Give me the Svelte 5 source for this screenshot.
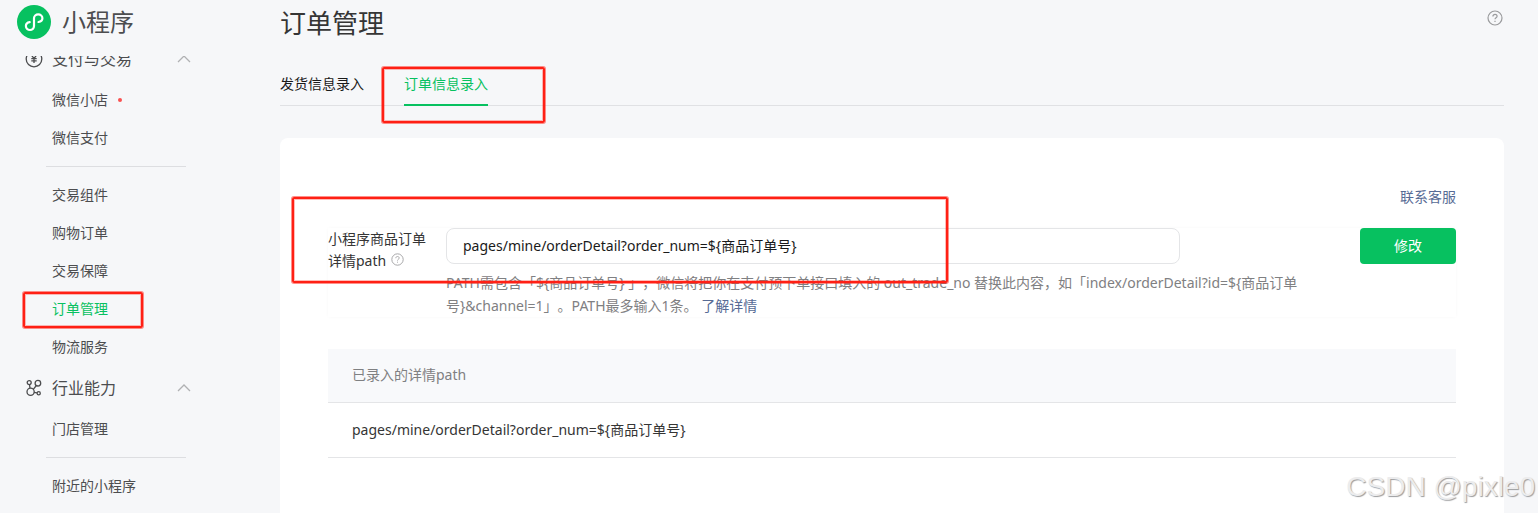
<script>
  const groups = [
    {
      title: '支付与交易',
      icon: 'pay',
      sections: [
        [{ label: '微信小店', dot: true }, { label: '微信支付' }],
        [
          { label: '交易组件' },
          { label: '购物订单' },
          { label: '交易保障' },
          { label: '订单管理', active: true },
          { label: '物流服务' }
        ]
      ]
    },
    {
      title: '行业能力',
      icon: 'industry',
      sections: [[{ label: '门店管理' }], [{ label: '附近的小程序' }]]
    }
  ];

  const tabs = [
    { label: '发货信息录入' },
    { label: '订单信息录入', active: true }
  ];

  let path = $state('pages/mine/orderDetail?order_num=${商品订单号}');
  const savedPaths = ['pages/mine/orderDetail?order_num=${商品订单号}'];
  const hintVar = '「${商品订单号} 」';
  const hintExample = '「index/orderDetail?id=${商品订单号}&channel=1」';
</script>

{#snippet help()}
  <svg class="help" viewBox="0 0 16 16" aria-hidden="true">
    <circle cx="8" cy="8" r="7" />
    <path d="M5.9 6.4c0-1.3.9-2.1 2.1-2.1s2.1.8 2.1 1.9c0 1.5-2.1 1.6-2.1 3.1" />
    <path d="M8 10.7v1.2" />
  </svg>
{/snippet}

<div class="app">
  <aside>
    <a class="brand" href="#home">
      <svg viewBox="0 0 34 34" aria-hidden="true">
        <circle cx="17" cy="17" r="17" fill="#07c160" />
        <path
          d="M12.7 17.2c-2.3.4-3.8 1.9-3.8 3.9 0 2.2 1.9 3.9 4.1 3.9s4-1.700 4-3.900v-7.800c0-2.200 1.900-3.900 4.200-3.900s4.200 1.600 4.200 3.800c0 1.900-1.500 3.400-3.900 3.800"
          fill="none" stroke="#fff" stroke-width="2.2" stroke-linecap="round" />
      </svg>
      <span>小程序</span>
    </a>
    <nav>
      <div class="menu">
        {#each groups as group}
          <button class="group" type="button">
            {#if group.icon === 'pay'}
              <svg class="glyph" viewBox="0 0 18 18" aria-hidden="true">
                <circle cx="9" cy="9" r="7.800" />
                <path d="M6.300 5l2.700 3.500L11.700 5M9 8.500v4.500M6.300 8.700h5.400M6.300 10.800h5.400" />
              </svg>
            {:else}
              <svg class="glyph" viewBox="0 0 18 18" aria-hidden="true">
                <circle cx="4.200" cy="3.600" r="2" />
                <circle cx="12.900" cy="4.200" r="2.800" />
                <circle cx="5.600" cy="12.700" r="3.600" />
                <circle cx="13.700" cy="14.200" r="1.600" />
                <path d="M4.500 5.600l.5 3.500M11.300 6.500L8.300 10.300M9 13.300l3.100.600" />
              </svg>
            {/if}
            <span>{group.title}</span>
            <svg class="chevron" viewBox="0 0 14 8" aria-hidden="true">
              <path d="M1 7l6-6 6 6" />
            </svg>
          </button>
          {#each group.sections as section, i}
            {#if i > 0}<hr />{/if}
            {#each section as item}
              <a class="item" class:active={item.active} href="#menu">
                <span>{item.label}</span>
                {#if item.dot}<i class="dot"></i>{/if}
                {#if item.active}<i class="mark mark-menu"></i>{/if}
              </a>
            {/each}
          {/each}
        {/each}
      </div>
    </nav>
  </aside>

  <main>
    <header>
      <h1>订单管理</h1>
      <button class="help-button" type="button" aria-label="帮助">{@render help()}</button>
    </header>

    <div class="tabs">
      {#each tabs as tab}
        <a href="#tab" class:active={tab.active}>
          {tab.label}
          {#if tab.active}<i class="mark mark-tab"></i>{/if}
        </a>
      {/each}
    </div>

    <section class="card">
      <a class="contact" href="#contact">联系客服</a>

      <form onsubmit={(e) => e.preventDefault()}>
        <label for="path">小程序商品订单详情path {@render help()}</label>
        <div class="field">
          <input id="path" type="text" bind:value={path} />
          <p>
            PATH需包含{hintVar}，微信将把你在支付预下单接口填入的 out_trade_no 替换此内容，如{hintExample}。PATH最多输入1条。
            <a href="#more">了解详情</a>
          </p>
        </div>
        <button class="primary" type="submit">修改</button>
        <i class="mark mark-form"></i>
      </form>

      <table>
        <thead>
          <tr><th>已录入的详情path</th></tr>
        </thead>
        <tbody>
          {#each savedPaths as saved}
            <tr><td>{saved}</td></tr>
          {/each}
        </tbody>
      </table>
    </section>
  </main>

  <div class="watermark">CSDN @pixle0</div>
</div>

<style>
  :global(body) {
    background: #f6f7f9;
  }

  .app {
    position: relative;
    display: flex;
    height: 100vh;
    overflow: hidden;
    font-family: 'Noto Sans', 'Noto Sans CJK SC', sans-serif;
    font-size: 14px;
    line-height: 22px;
    text-spacing-trim: space-all;
    color: #353535;
  }

  a {
    color: inherit;
    text-decoration: none;
  }

  button {
    font: inherit;
    color: inherit;
    background: none;
    border: 0;
    padding: 0;
    cursor: pointer;
  }

  aside {
    display: flex;
    flex-direction: column;
    flex: none;
    width: 280px;
    color: #4c4d4f;
  }

  .brand {
    display: flex;
    align-items: center;
    gap: 11px;
    flex: none;
    height: 44px;
    padding: 0 17px;
    margin-bottom: 12px;
    font-size: 24px;
  }

  .brand svg {
    width: 34px;
    height: 34px;
  }

  nav {
    flex: 1;
    min-height: 0;
    overflow: hidden;
  }

  .menu {
    margin-top: -19px;
    padding: 0 89px 0 24px;
  }

  .group {
    display: flex;
    align-items: center;
    width: 100%;
    height: 44px;
    font-size: 16px;
  }

  .glyph {
    width: 20px;
    height: 18px;
    margin-right: 8px;
    fill: none;
    stroke: #4c4d4f;
    stroke-width: 1.300;
  }

  .chevron {
    width: 14px;
    height: 8px;
    margin-left: auto;
    fill: none;
    stroke: #b0b1b3;
    stroke-width: 1.300;
  }

  .item {
    position: relative;
    display: flex;
    align-items: center;
    gap: 10px;
    height: 38px;
    padding-left: 28px;
  }

  .item.active {
    color: #07c160;
  }

  .dot {
    width: 4px;
    height: 4px;
    border-radius: 50%;
    background: #fa5151;
  }

  hr {
    height: 1px;
    margin: 9px 5px 9px 22px;
    border: 0;
    background: #dddee1;
  }

  .mark {
    position: absolute;
    box-sizing: border-box;
    border: 2px solid #ff2015;
    border-radius: 2px;
    box-shadow:
      0 0 0 1px rgba(255, 32, 21, 0.5),
      inset 0 0 0 1px rgba(255, 32, 21, 0.3);
    pointer-events: none;
  }

  .mark-menu {
    left: -1px;
    top: 2px;
    width: 120px;
    height: 36px;
  }

  .mark-tab {
    left: -22px;
    top: 4px;
    width: 163px;
    height: 56px;
  }

  .mark-form {
    left: -36px;
    top: -31px;
    width: 656px;
    height: 86px;
  }

  main {
    display: flex;
    flex-direction: column;
    flex: 1;
    min-width: 0;
    padding-right: 34px;
  }

  header {
    display: flex;
    align-items: flex-start;
    justify-content: space-between;
    height: 63px;
    flex: none;
  }

  h1 {
    margin: 0;
    padding-top: 5px;
    font-size: 26px;
    line-height: 36px;
    font-weight: 400;
  }

  .help {
    width: 16px;
    height: 16px;
    fill: none;
    stroke: #9a9b9d;
    stroke-width: 1.200;
  }

  .help-button {
    display: flex;
    padding: 10px 1px;
  }

  .tabs {
    display: flex;
    gap: 40px;
    flex: none;
    margin-bottom: 32px;
    border-bottom: 1px solid #e0e1e4;
    color: #1a1a1a;
  }

  .tabs a {
    position: relative;
    height: 42px;
    line-height: 42px;
  }

  .tabs a.active {
    height: 41px;
    margin-bottom: -1px;
    border-bottom: 2px solid #07c160;
    color: #07c160;
  }

  .card {
    display: flex;
    flex-direction: column;
    flex: 1;
    padding: 48px 48px 0;
    border-radius: 8px 8px 0 0;
    background: #fff;
  }

  .contact {
    align-self: flex-end;
    margin-bottom: 20px;
    color: #576b95;
  }

  form {
    position: relative;
    display: flex;
    align-items: flex-start;
    gap: 20px;
    margin-bottom: 32px;
    box-shadow: 0 0 3px rgba(0, 0, 0, 0.03);
  }

  label {
    flex: none;
    width: 98px;
    line-height: 22px;
  }

  label .help {
    width: 13px;
    height: 13px;
    margin-left: 1px;
    stroke: #a6a6a8;
  }

  .field {
    flex: 1;
    min-width: 0;
    padding-right: 4px;
  }

  input {
    box-sizing: border-box;
    display: block;
    width: 100%;
    max-width: 734px;
    height: 36px;
    padding: 0 16px 2px;
    border: 1px solid #e4e5e7;
    border-radius: 8px;
    background: #fff;
    color: #1a1a1a;
    font: inherit;
  }

  p {
    margin: 7px 0 0;
    line-height: 23px;
    color: #7f8082;
  }

  p a {
    color: #576b95;
  }

  .primary {
    flex: none;
    width: 96px;
    height: 36px;
    border-radius: 4px;
    background: #07c160;
    color: #fff;
  }

  table {
    width: 100%;
    border-collapse: collapse;
  }

  th,
  td {
    height: 54px;
    padding: 0 24px;
    border-bottom: 1px solid #e4e5e7;
    text-align: left;
    font-weight: 400;
  }

  th {
    height: 51px;
    padding-bottom: 2px;
    background: #f8f9fb;
    color: #7f8082;
  }

  .watermark {
    position: absolute;
    right: 3px;
    bottom: 8px;
    font-family: 'Liberation Sans', Arial, sans-serif;
    font-size: 28px;
    line-height: 36px;
    color: #ececed;
    text-shadow: 1px 1px 1px #9c9d9f;
    pointer-events: none;
  }
</style>
